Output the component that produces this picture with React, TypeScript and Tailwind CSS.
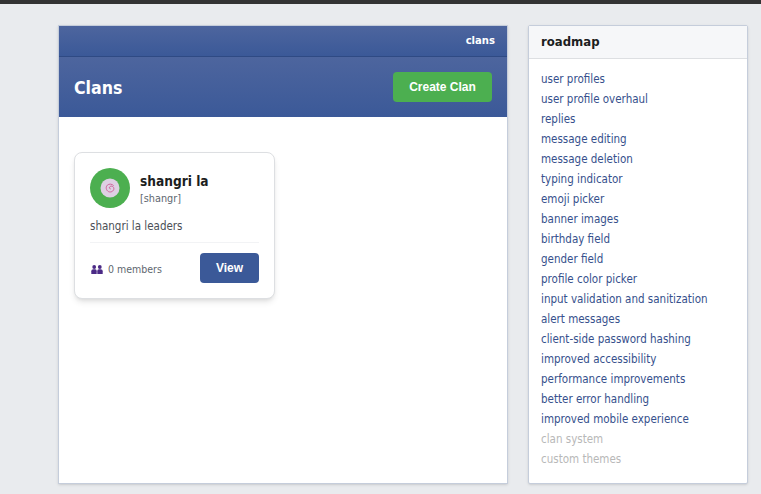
const roadmap = [
  'user profiles',
  'user profile overhaul',
  'replies',
  'message editing',
  'message deletion',
  'typing indicator',
  'emoji picker',
  'banner images',
  'birthday field',
  'gender field',
  'profile color picker',
  'input validation and sanitization',
  'alert messages',
  'client-side password hashing',
  'improved accessibility',
  'performance improvements',
  'better error handling',
  'improved mobile experience',
];

const upcoming = ['clan system', 'custom themes'];

const ClanAvatar = () => (
  <div className="w-10 h-10 rounded-full bg-[#4caf50] flex items-center justify-center shrink-0">
    <svg width="20" height="20" viewBox="0 0 20 20">
      <circle cx="10" cy="10" r="9.500" fill="#ddd0e4" />
      <path
        d="M13.500 7.500C12.200 5.800 9 5.600 7.300 7.200 5.500 9 6 12.300 8.500 13.600c2.300 1.100 5.200-.4 5.400-2.800.1-2-2-3.200-3.700-2.400-1.200.6-1.200 2.200.1 2.500"
        fill="none"
        stroke="#d0649c"
        strokeWidth="1"
        strokeLinecap="round"
      />
    </svg>
  </div>
);

const MembersIcon = () => (
  <svg width="12" height="9" viewBox="0 0 12 9" fill="#4b2a86" className="shrink-0">
    <circle cx="3.200" cy="2" r="1.900" />
    <circle cx="8.800" cy="2" r="1.900" />
    <path d="M0.300 9V6.300C0.300 5 1.200 4.300 2.400 4.300h1.600c1.200 0 1.700.7 1.700 2V9z" />
    <path d="M6.300 9V6.300c0-1.300.5-2 1.700-2h1.600c1.200 0 2.100.7 2.100 2V9z" />
  </svg>
);

export default function App() {
  return (
    <div className="w-full h-[494px] overflow-hidden bg-[#e9ebee] font-['DejaVu_Sans_Condensed','Liberation_Sans',sans-serif]">
      <div className="h-1 bg-[#333333]" />
      <div className="flex items-start gap-5 pl-[58px] pt-[21px]">
        <main className="w-[450px] h-[459px] bg-white border border-[#c5cddb] shadow-sm">
          <div className="h-[31px] flex items-center justify-end px-3 bg-gradient-to-b from-[#4d659e] to-[#3b5998] border-b border-[#2f4a84]">
            <span className="text-[11.2px] font-bold text-white">clans</span>
          </div>
          <div className="h-[60px] flex items-center justify-between pl-[15px] pr-[15px] bg-gradient-to-b from-[#4d659e] to-[#3b5998]">
            <h1 className="pt-[2px] text-[17.6px] font-bold text-white">Clans</h1>
            <button className="w-[99px] h-[30px] rounded bg-[#4caf50] font-['Liberation_Sans',sans-serif] text-[12px] font-bold text-white">
              Create Clan
            </button>
          </div>
          <div className="pl-[15px] pt-[35px]">
            <div className="w-[201px] h-[147px] bg-white border border-[#dddfe2] rounded-lg shadow-md px-[15px] pt-[15px]">
              <div className="flex items-center gap-[10px]">
                <ClanAvatar />
                <div>
                  <div className="text-[13.6px] font-bold leading-[20px] text-[#1c1e21]">shangri la</div>
                  <div className="text-[10.800px] leading-[15px] text-[#606770]">[shangr]</div>
                </div>
              </div>
              <p className="mt-[9px] pb-[7px] border-b border-[#f2f3f5] text-[11.500px] leading-[18px] text-[#4b4f56]">
                shangri la leaders
              </p>
              <div className="mt-[10px] flex items-center justify-between">
                <div className="flex items-center gap-[5px] pl-[1px] pt-[3px] text-[10.500px] text-[#606770]">
                  <MembersIcon />
                  <span>0 members</span>
                </div>
                <button className="w-[59px] h-[30px] rounded bg-[#3b5998] font-['Liberation_Sans',sans-serif] text-[12px] font-bold text-white">
                  View
                </button>
              </div>
            </div>
          </div>
        </main>

        <aside className="w-[220px] h-[459px] bg-white border border-[#c5cddb] rounded-[2px] shadow-sm">
          <div className="h-[33px] flex items-center px-3 bg-[#f6f7f9] border-b border-[#dddfe2]">
            <h2 className="text-[13px] font-bold text-[#1c1e21]">roadmap</h2>
          </div>
          <ul className="px-3 pt-[10px]">
            {roadmap.map((item) => (
              <li key={item} className="h-5 text-[11.500px] leading-5 text-[#36508c]">{item}</li>
            ))}
            {upcoming.map((item) => (
              <li key={item} className="h-5 text-[11.500px] leading-5 text-[#b8b8b8]">{item}</li>
            ))}
          </ul>
        </aside>
      </div>
    </div>
  );
}
